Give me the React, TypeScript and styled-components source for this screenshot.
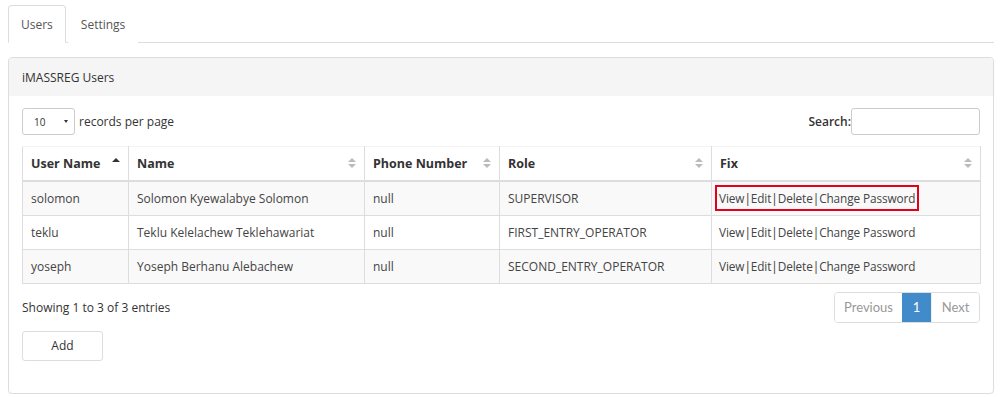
import React from 'react';
import styled, { createGlobalStyle } from 'styled-components';

const GlobalStyle = createGlobalStyle`
  body {
    margin: 0;
    padding: 5px 10px 0 8px;
    font-family: "Open Sans", "Liberation Sans", sans-serif;
    font-size: 12px;
    color: #333;
    background: #fff;
  }
`;

const Tabs = styled.ul`
  display: flex;
  list-style: none;
  margin: 0;
  padding: 0;
  border-bottom: 1px solid #ddd;
  height: 37px;
`;

const Tab = styled.li<{ $active?: boolean }>`
  display: flex;
  align-items: center;
  padding: 0 12px;
  height: 38px;
  box-sizing: border-box;
  border: 1px solid ${(p) => (p.$active ? '#ddd' : 'transparent')};
  border-bottom-color: ${(p) => (p.$active ? '#fff' : 'transparent')};
  border-radius: 4px 4px 0 0;
  background: #fff;
  color: #555;
  font-size: 12px;
  margin-right: 2px;
`;

const Panel = styled.div`
  margin-top: 14px;
  border: 1px solid #ddd;
  border-radius: 4px;
  box-shadow: 0 1px 1px rgba(0, 0, 0, 0.05);
  height: 337px;
  box-sizing: border-box;
`;

const PanelHeading = styled.div`
  background: #f5f5f5;
  padding: 0 13px;
  height: 38px;
  display: flex;
  align-items: center;
  color: #333;
  font-size: 12px;
  border-radius: 3px 3px 0 0;
`;

const PanelBody = styled.div`
  padding: 12px 13px 0;
`;

const TopBar = styled.div`
  display: flex;
  justify-content: space-between;
  align-items: center;
  height: 27px;
`;

const LengthLabel = styled.label`
  display: flex;
  align-items: center;
  gap: 4px;
  font-size: 12px;
`;

const Select = styled.div`
  width: 53px;
  height: 27px;
  box-sizing: border-box;
  border: 1px solid #ccc;
  border-radius: 3px;
  display: flex;
  align-items: center;
  justify-content: space-between;
  padding: 0 6px 0 11px;
  font-size: 10px;
  color: #333;
  &::after {
    content: '';
    border-left: 2.5px solid transparent;
    border-right: 2.5px solid transparent;
    border-top: 3px solid #333;
  }
`;

const SearchLabel = styled.label`
  display: flex;
  align-items: center;
  font-size: 12px;
  font-weight: 600;
`;

const SearchInput = styled.div`
  width: 129px;
  height: 27px;
  box-sizing: border-box;
  border: 1px solid #ccc;
  border-radius: 3px;
`;

const Table = styled.table`
  width: 958px;
  margin-top: 11px;
  border-collapse: collapse;
  table-layout: fixed;
  font-size: 12px;
`;

const Th = styled.th<{ $w: number }>`
  width: ${(p) => p.$w}px;
  box-sizing: border-box;
  height: 34px;
  text-align: left;
  padding: 0 8px;
  font-weight: 700;
  font-size: 12.5px;
  border: 1px solid #ddd;
  border-top: 1px solid #f4f4f4;
  border-bottom: 2px solid #ddd;
  position: relative;
  color: #333;
`;

const SortIcon = styled.span<{ $active?: boolean }>`
  position: absolute;
  right: 8px;
  top: 50%;
  transform: translateY(-50%);
  display: flex;
  flex-direction: column;
  gap: 2px;
  &::before {
    content: '';
    border-left: 4px solid transparent;
    border-right: 4px solid transparent;
    border-bottom: 4px solid ${(p) => (p.$active ? '#333' : '#bbb')};
  }
  &::after {
    content: '';
    border-left: 4px solid transparent;
    border-right: 4px solid transparent;
    border-top: 4px solid ${(p) => (p.$active ? 'transparent' : '#bbb')};
  }
`;

const Tr = styled.tr<{ $odd?: boolean }>`
  background: ${(p) => (p.$odd ? '#f9f9f9' : '#fff')};
`;

const Td = styled.td`
  height: 33px;
  padding: 0 8px;
  border: 1px solid #ddd;
  color: #444;
  white-space: nowrap;
  overflow: hidden;
`;

const Links = styled.span<{ $marked?: boolean }>`
  display: inline-block;
  padding: 3px 2px;
  margin-left: -5px;
  border: 2px solid ${(p) => (p.$marked ? '#e2001a' : 'transparent')};
  color: #444;
  font-size: 11.8px;
  letter-spacing: -0.1px;
`;

const Sep = styled.span`
  color: #333;
`;

const Footer = styled.div`
  display: flex;
  justify-content: space-between;
  align-items: center;
  margin-top: 8px;
`;

const Info = styled.div`
  font-size: 12px;
  color: #333;
`;

const Pager = styled.div`
  display: flex;
  border: 1px solid #ddd;
  border-radius: 4px;
  height: 31px;
  box-sizing: border-box;
  overflow: hidden;
  font-family: Lato, "Open Sans", sans-serif;
`;

const PageItem = styled.span<{ $active?: boolean; $w: number }>`
  width: ${(p) => p.$w}px;
  display: flex;
  align-items: center;
  justify-content: center;
  font-size: 13px;
  color: ${(p) => (p.$active ? '#fff' : '#999')};
  background: ${(p) => (p.$active ? '#428bca' : '#fff')};
  border-left: ${(p) => (p.$active ? '0' : '1px solid #eee')};
  &:first-child {
    border-left: 0;
  }
`;

const AddButton = styled.button`
  margin-top: 8px;
  width: 81px;
  height: 30px;
  background: #fff;
  border: 1px solid #ddd;
  border-radius: 3px;
  font-family: "Open Sans", "Liberation Sans", sans-serif;
  font-size: 12px;
  color: #333;
`;

const columns = [
  { label: 'User Name', w: 106, active: true },
  { label: 'Name', w: 236 },
  { label: 'Phone Number', w: 135 },
  { label: 'Role', w: 212 },
  { label: 'Fix', w: 269 },
];

const users = [
  { user: 'solomon', name: 'Solomon Kyewalabye Solomon', role: 'SUPERVISOR' },
  { user: 'teklu', name: 'Teklu Kelelachew Teklehawariat', role: 'FIRST_ENTRY_OPERATOR' },
  { user: 'yoseph', name: 'Yoseph Berhanu Alebachew', role: 'SECOND_ENTRY_OPERATOR' },
];

const FixLinks = ({ marked }: { marked?: boolean }) => (
  <Links $marked={marked}>
    View<Sep>|</Sep>Edit<Sep>|</Sep>Delete<Sep>|</Sep>Change Password
  </Links>
);

export default function App() {
  return (
    <>
      <GlobalStyle />
      <Tabs>
        <Tab $active>Users</Tab>
        <Tab>Settings</Tab>
      </Tabs>
      <Panel>
        <PanelHeading>iMASSREG Users</PanelHeading>
        <PanelBody>
          <TopBar>
            <LengthLabel>
              <Select>10</Select>
              records per page
            </LengthLabel>
            <SearchLabel>
              Search:
              <SearchInput />
            </SearchLabel>
          </TopBar>
          <Table>
            <thead>
              <tr>
                {columns.map((c) => (
                  <Th key={c.label} $w={c.w}>
                    {c.label}
                    <SortIcon $active={c.active} />
                  </Th>
                ))}
              </tr>
            </thead>
            <tbody>
              {users.map((u, i) => (
                <Tr key={u.user} $odd={i % 2 === 0}>
                  <Td>{u.user}</Td>
                  <Td>{u.name}</Td>
                  <Td>null</Td>
                  <Td>{u.role}</Td>
                  <Td>
                    <FixLinks marked={i === 0} />
                  </Td>
                </Tr>
              ))}
            </tbody>
          </Table>
          <Footer>
            <Info>Showing 1 to 3 of 3 entries</Info>
            <Pager>
              <PageItem $w={67}>Previous</PageItem>
              <PageItem $w={29} $active>1</PageItem>
              <PageItem $w={47}>Next</PageItem>
            </Pager>
          </Footer>
          <AddButton>Add</AddButton>
        </PanelBody>
      </Panel>
    </>
  );
}
